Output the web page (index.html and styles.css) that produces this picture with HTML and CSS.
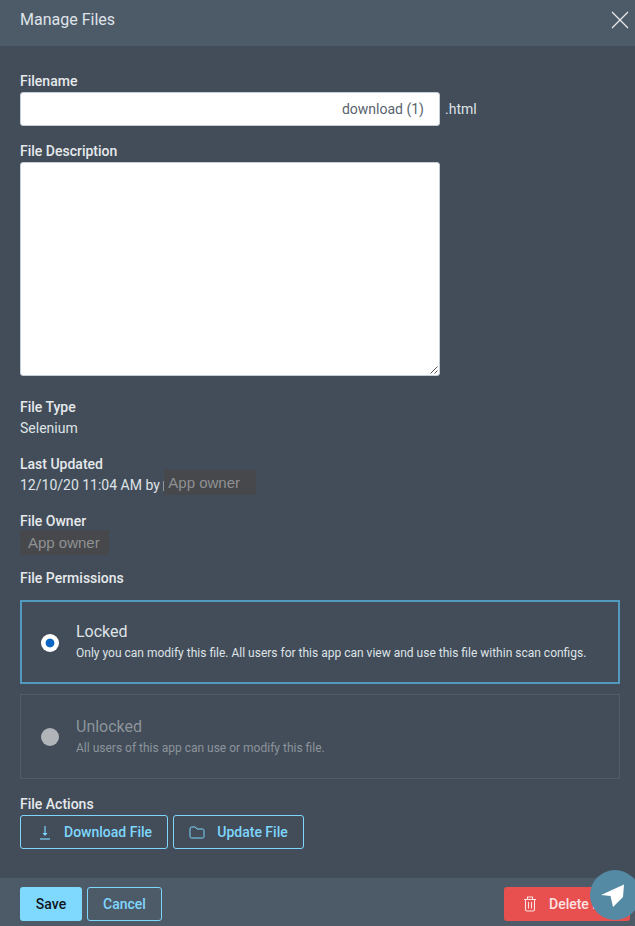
FILE: index.html
```html
<!DOCTYPE html>
<html lang="en">
<head>
<meta charset="utf-8">
<title>Manage Files</title>
<link rel="stylesheet" href="styles.css">
</head>
<body>
<div class="modal">
  <header class="head">
    <h1 class="title">Manage Files</h1>
    <svg class="close" width="18" height="18" viewBox="0 0 18 18"><path d="M1 1 17 17M17 1 1 17" stroke="#e8ecef" stroke-width="1.2" fill="none"/></svg>
  </header>
  <main class="body">
    <div class="label">Filename</div>
    <div class="name-row">
      <div class="input">download (1)</div>
      <span class="ext">.html</span>
    </div>
    <div class="label label-desc">File Description</div>
    <div class="textarea">
      <svg class="grip" width="8" height="8" viewBox="0 0 8 8"><path d="M7.5 .5 .5 7.5M7.5 4.5 4.5 7.5" stroke="#555" stroke-width="1" fill="none"/></svg>
    </div>
    <div class="label label-type">File Type</div>
    <div class="value">Selenium</div>
    <div class="label label-next">Last Updated</div>
    <div class="value updated">12/10/20 11:04 AM by <span class="tick"></span><span class="redact redact-a">App owner</span></div>
    <div class="label label-owner">File Owner</div>
    <div class="redact redact-b">App owner</div>
    <div class="label label-perm">File Permissions</div>
    <div class="option selected">
      <span class="radio on"></span>
      <div class="opt-body">
        <div class="opt-title">Locked</div>
        <div class="opt-text">Only you can modify this file. All users for this app can view and use this file within scan configs.</div>
      </div>
    </div>
    <div class="option disabled">
      <span class="radio off"></span>
      <div class="opt-body">
        <div class="opt-title">Unlocked</div>
        <div class="opt-text">All users of this app can use or modify this file.</div>
      </div>
    </div>
    <div class="label label-actions">File Actions</div>
    <div class="actions">
      <button class="btn outline btn-dl">
        <svg width="12" height="15" viewBox="0 0 12 15"><path d="M6 1V10" stroke="#7fd6fd" stroke-width="1.200" fill="none"/><path d="M3.500 8 6 11 8.500 8Z" fill="#7fd6fd"/><path d="M1 14H11" stroke="#7fd6fd" stroke-width="1.200" fill="none"/></svg>
        Download File
      </button>
      <button class="btn outline btn-up">
        <svg width="16" height="13" viewBox="0 0 16 13"><path d="M1 3V10.500Q1 12 2.500 12H13.500Q15 12 15 10.500V4.500Q15 3 13.500 3H8L6.500 1H2.500Q1 1 1 3Z" stroke="#7fd6fd" stroke-width="1" fill="none"/></svg>
        Update File
      </button>
    </div>
  </main>
  <footer class="foot">
    <button class="btn save">Save</button>
    <button class="btn outline cancel">Cancel</button>
    <button class="btn delete">
      <svg width="14" height="16" viewBox="0 0 14 16"><path d="M1 3.500H13M4.500 3V1H9.500V3M2.500 3.500V13.500Q2.500 15 4 15H10Q11.500 15 11.500 13.500V3.500M5.500 6V12.500M8.500 6V12.500" stroke="#fbe3e3" stroke-width="1.100" fill="none"/></svg>
      Delete File
    </button>
  </footer>
</div>
<div class="fab">
  <svg width="24" height="24" viewBox="0 0 24 24"><path d="M0 11 23 0.500 22 13 12 23 9.500 12Z" fill="#fff"/></svg>
</div>
</body>
</html>
```

FILE: styles.css
```css
* { box-sizing: border-box; }
html, body { margin: 0; height: 100%; overflow: hidden; }
body { background: #424d59; font-family: Roboto, "Liberation Sans", sans-serif; color: #e8ebee; position: relative; }
.modal { display: flex; flex-direction: column; height: 926px; }
.head { height: 46px; flex: none; background: #4d5b69; display: flex; align-items: center; justify-content: space-between; padding: 0 6px 6px 20px; }
.title { margin: 0; font-size: 16px; font-weight: 400; line-height: 40px; color: #dfe3e7; }
.close { display: block; }
.body { flex: 1; padding: 27px 15px 0 20px; }
.label { font-size: 14px; font-weight: 500; line-height: 16px; color: #e6e9ec; }
.name-row { display: flex; align-items: center; margin-top: 3px; height: 34px; }
.input { width: 420px; height: 34px; background: #fff; border-radius: 3px; border: 1px solid #c5ced6; font-size: 14px; line-height: 32px; text-align: right; padding-right: 15px; color: #59636d; }
.ext { font-size: 14px; margin-left: 5px; color: #dfe3e7; }
.label-desc { margin-top: 17px; }
.textarea { width: 420px; height: 214px; margin-top: 3px; background: #fff; border-radius: 3px; border: 1px solid #c5ced6; position: relative; }
.grip { position: absolute; right: 1px; bottom: 1px; }
.label-type { margin-top: 23px; }
.value { font-size: 14px; line-height: 16px; margin-top: 5px; color: #dfe3e7; }
.label-next { margin-top: 20px; }
.updated { display: flex; align-items: flex-start; margin-top: 5px; white-space: pre; }
.tick { width: 1px; height: 10px; background: #8d959d; margin: 4px 0 0; }
.redact { background: #46484b; color: #8f9193; font-size: 15px; font-family: "Liberation Sans", Arial, sans-serif; }
.redact-a { width: 92px; height: 25px; line-height: 25px; padding-left: 4px; margin-top: -7px; }
.label-owner { margin-top: 18px; }
.redact-b { width: 89px; height: 25px; line-height: 26px; padding-left: 8px; margin-top: 1px; }
.label-perm { margin-top: 15px; }
.option { width: 600px; height: 84px; display: flex; align-items: center; padding-left: 20px; gap: 17px; border: 1px solid #4e5b68; }
.selected { margin-top: 14px; border: 2px solid #5199bd; padding-left: 19px; padding-top: 1px; }
.disabled { margin-top: 10px; height: 85px; padding-top: 1px; }
.opt-body { margin-top: -2px; }
.radio { width: 18px; height: 18px; border-radius: 50%; flex: none; }
.on { background: radial-gradient(circle at center, #0a66c2 0 4px, #fff 4.8px); }
.off { background: #b1b5ba; }
.opt-title { font-size: 16px; line-height: 20px; font-weight: 400; color: #dfe3e7; }
.opt-text { font-size: 12px; line-height: 16px; margin-top: 3px; color: #dfe3e7; }
.disabled .opt-title { color: #8d949b; }
.disabled .opt-text { color: #8d949b; }
.label-actions { margin-top: 17px; }
.actions { display: flex; gap: 5px; margin-top: 3px; }
.btn { font-family: inherit; font-size: 14px; font-weight: 500; height: 34px; border-radius: 3px; display: inline-flex; align-items: center; justify-content: center; padding: 0; }
.outline { background: transparent; border: 1px solid #7fd6fd; color: #7fd6fd; }
.btn-dl { width: 148px; gap: 13px; justify-content: flex-start; padding-left: 18px; }
.btn-up { width: 131px; gap: 12px; }
.foot { height: 48px; flex: none; background: #4d5b69; display: flex; align-items: flex-start; padding: 9px 0 0 20px; gap: 5px; }
.save { width: 62px; background: #7fd9ff; color: #10161b; border: 0; }
.cancel { width: 75px; }
.delete { width: 126px; margin-left: auto; margin-right: 5px; background: #e84f4f; color: #fbe3e3; border: 0; gap: 12px; justify-content: flex-start; padding-left: 19px; }
.fab { position: absolute; left: 590px; top: 870px; width: 50px; height: 50px; border-radius: 50%; background: #548aa3; display: flex; align-items: flex-start; padding: 14px 0 0 11px; }
.fab svg { display: block; }
```
